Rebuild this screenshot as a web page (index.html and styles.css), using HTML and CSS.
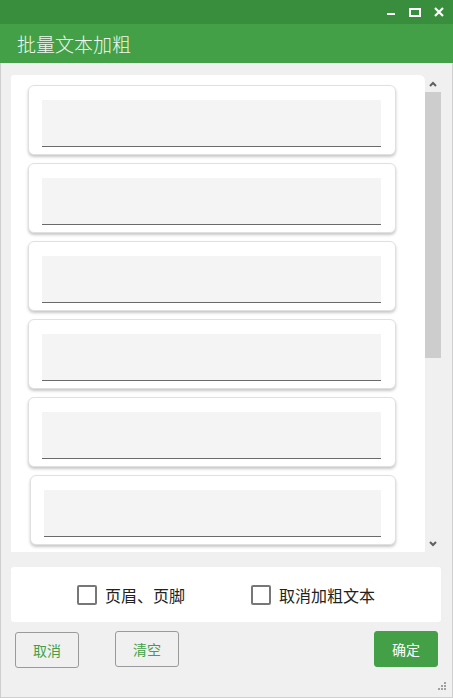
FILE: index.html
```html
<!DOCTYPE html>
<html lang="zh-CN">
<head>
    <meta charset="UTF-8">
    <meta name="viewport" content="width=device-width, initial-scale=1.0">
    <title>批量文本加粗</title>
    <link rel="stylesheet" href="styles.css">
</head>
<body>
    <div class="window">
        <div class="titlebar">
            <span class="win-btn">
                <svg width="9" height="9" viewBox="0 0 9 9"><rect x="0" y="5" width="8" height="2" fill="#fff"/></svg>
            </span>
            <span class="win-btn">
                <svg width="12" height="9" viewBox="0 0 12 9"><rect x="1" y="1" width="10" height="7" fill="none" stroke="#fff" stroke-width="2"/></svg>
            </span>
            <span class="win-btn">
                <svg width="10" height="10" viewBox="0 0 10 10"><path d="M1 1 L9 9 M9 1 L1 9" stroke="#fff" stroke-width="2.2"/></svg>
            </span>
        </div>
        <div class="header">批量文本加粗</div>

        <div class="main">
            <div class="list-box">
                <div class="list">
                    <div class="card"><div class="field"></div></div>
                    <div class="card"><div class="field"></div></div>
                    <div class="card"><div class="field"></div></div>
                    <div class="card"><div class="field"></div></div>
                    <div class="card"><div class="field"></div></div>
                    <div class="card card-last"><div class="field"></div></div>
                </div>
                <div class="scrollbar">
                    <div class="arrow">
                        <svg width="8" height="6" viewBox="0 0 8 6"><path d="M1 5 L4 2 L7 5" fill="none" stroke="#606060" stroke-width="2"/></svg>
                    </div>
                    <div class="thumb"></div>
                    <div class="track"></div>
                    <div class="arrow">
                        <svg width="8" height="6" viewBox="0 0 8 6"><path d="M1 1 L4 4 L7 1" fill="none" stroke="#606060" stroke-width="2"/></svg>
                    </div>
                </div>
            </div>

            <div class="options">
                <label class="check"><span class="box"></span>页眉、页脚</label>
                <label class="check"><span class="box"></span>取消加粗文本</label>
            </div>

            <div class="actions">
                <button class="btn btn-cancel">取消</button>
                <button class="btn btn-clear">清空</button>
                <span class="spacer"></span>
                <button class="btn btn-ok">确定</button>
            </div>
        </div>

        <svg class="grip" width="10" height="10" viewBox="0 0 10 10">
            <rect x="7" y="0" width="2" height="2" fill="#a0a0a0"/>
            <rect x="4" y="3" width="2" height="2" fill="#a0a0a0"/>
            <rect x="7" y="3" width="2" height="2" fill="#a0a0a0"/>
            <rect x="1" y="6" width="2" height="2" fill="#a0a0a0"/>
            <rect x="4" y="6" width="2" height="2" fill="#a0a0a0"/>
            <rect x="7" y="6" width="2" height="2" fill="#a0a0a0"/>
        </svg>
    </div>
</body>
</html>
```

FILE: styles.css
```css
body {
    margin: 0;
    font-family: "Noto Sans CJK SC", "Noto Sans", sans-serif;
    background-color: #f0f0f0;
}
.window {
    position: relative;
    width: 453px;
    height: 698px;
    box-sizing: border-box;
    border: 1px solid #cfcfcf;
    border-top: none;
    background-color: #f0f0f0;
    display: flex;
    flex-direction: column;
}
.titlebar {
    height: 24px;
    margin: 0 -1px;
    background-color: #388e3c;
    display: flex;
    justify-content: flex-end;
    align-items: center;
    padding-right: 8px;
    gap: 12px;
}
.win-btn {
    display: flex;
    align-items: center;
    justify-content: center;
    width: 12px;
    height: 12px;
}
.header {
    height: 39px;
    margin: 0 -1px;
    background-color: #43a047;
    color: #eef7ee;
    font-size: 19px;
    font-weight: 300;
    line-height: 39px;
    padding-left: 17px;
}
.main {
    flex: 1;
    padding: 12px 11px 0 10px;
    display: flex;
    flex-direction: column;
}
.list-box {
    height: 477px;
    display: flex;
}
.list {
    width: 414px;
    background-color: #fff;
    border-radius: 3px 6px 0 0;
    overflow: hidden;
    padding: 10px 0 0 17px;
    box-sizing: border-box;
    display: flex;
    flex-direction: column;
    gap: 8px;
}
.card {
    width: 368px;
    height: 70px;
    flex-shrink: 0;
    box-sizing: border-box;
    background-color: #fff;
    border: 1px solid #e0e0e0;
    border-radius: 6px;
    box-shadow: 0 2px 3px rgba(0, 0, 0, 0.22);
    padding: 14px 0 0 13px;
}
.card-last {
    width: 366px;
    margin-left: 2px;
}
.card-last .field {
    width: 337px;
}
.field {
    width: 339px;
    height: 47px;
    box-sizing: border-box;
    background-color: #f4f4f4;
    border-bottom: 1px solid #6a6a6a;
}
.scrollbar {
    width: 16px;
    background-color: #f0f0f0;
    display: flex;
    flex-direction: column;
}
.arrow {
    height: 17px;
    display: flex;
    align-items: center;
    justify-content: center;
}
.thumb {
    height: 266px;
    background-color: #cdcdcd;
}
.track {
    flex: 1;
}
.options {
    margin-top: 15px;
    height: 55px;
    background-color: #fff;
    border-radius: 3px;
    display: flex;
    justify-content: center;
    align-items: center;
    gap: 66px;
}
.check {
    display: flex;
    align-items: center;
    gap: 8px;
    font-size: 16px;
    color: #222;
}
.box {
    width: 20px;
    height: 20px;
    box-sizing: border-box;
    border: 2px solid #777;
    border-radius: 2px;
}
.actions {
    margin-top: 9px;
    display: flex;
    align-items: flex-start;
    padding-left: 4px;
    padding-right: 3px;
    gap: 36px;
}
.spacer {
    flex: 1;
}
.btn {
    width: 64px;
    height: 36px;
    border: 1px solid #9a9a9a;
    border-radius: 3px;
    background-color: transparent;
    color: #43a047;
    font-family: inherit;
    font-size: 14px;
    padding: 0;
}
.btn-cancel {
    margin-top: 1px;
}
.btn-ok {
    background-color: #43a047;
    border-color: #43a047;
    color: #fff;
}
.grip {
    position: absolute;
    right: 5px;
    bottom: 5px;
}
```
